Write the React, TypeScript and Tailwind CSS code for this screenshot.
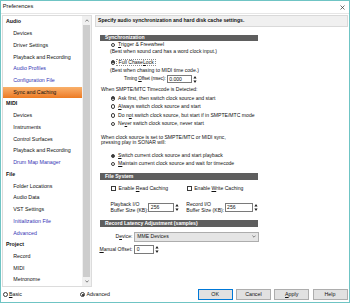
import type { ReactNode } from "react"

type TreeItem = { label: string; level: 0 | 1; blue?: boolean; selected?: boolean }

const tree: TreeItem[] = [
  { label: "Audio", level: 0 },
  { label: "Devices", level: 1 },
  { label: "Driver Settings", level: 1 },
  { label: "Playback and Recording", level: 1 },
  { label: "Audio Profiles", level: 1, blue: true },
  { label: "Configuration File", level: 1, blue: true },
  { label: "Sync and Caching", level: 1, selected: true },
  { label: "MIDI", level: 0 },
  { label: "Devices", level: 1 },
  { label: "Instruments", level: 1 },
  { label: "Control Surfaces", level: 1 },
  { label: "Playback and Recording", level: 1 },
  { label: "Drum Map Manager", level: 1, blue: true },
  { label: "File", level: 0 },
  { label: "Folder Locations", level: 1 },
  { label: "Audio Data", level: 1 },
  { label: "VST Settings", level: 1 },
  { label: "Initialization File", level: 1, blue: true },
  { label: "Advanced", level: 1, blue: true },
  { label: "Project", level: 0 },
  { label: "Record", level: 1 },
  { label: "MIDI", level: 1 },
  { label: "Metronome", level: 1 },
]

function Radio({ checked = false, children, className = "" }: { checked?: boolean; children: ReactNode; className?: string }) {
  return (
    <div className={`flex items-center h-[6px] ${className}`}>
      <span className="flex items-center justify-center w-[4.6px] h-[4.6px] rounded-full border border-[#3a3a3a] bg-white shrink-0">
        {checked && <span className="w-[2px] h-[2px] rounded-full bg-[#111]" />}
      </span>
      <span className="ml-[3px] whitespace-nowrap">{children}</span>
    </div>
  )
}

function Check({ children, className = "" }: { children: ReactNode; className?: string }) {
  return (
    <div className={`flex items-center h-[6px] ${className}`}>
      <span className="w-[5px] h-[5px] border border-[#3a3a3a] bg-white shrink-0" />
      <span className="ml-[2.5px] whitespace-nowrap">{children}</span>
    </div>
  )
}

function Spin() {
  return (
    <svg width="4" height="9" viewBox="0 0 4 9" className="ml-[1px] shrink-0">
      <path d="M0.4 3.6 L2 1 L3.6 3.6 Z" fill="#1a1a1a" />
      <path d="M0.4 5.4 L2 8 L3.6 5.4 Z" fill="#1a1a1a" />
    </svg>
  )
}

function NumBox({ value, className = "" }: { value: string; className?: string }) {
  return (
    <div className="flex items-center shrink-0">
      <div className={`border border-[#7a7a7a] bg-white flex items-center pl-[1.5px] ${className}`}>{value}</div>
      <Spin />
    </div>
  )
}

function Bar({ title, className = "" }: { title: string; className?: string }) {
  return (
    <div className={`w-[158px] h-[6.5px] bg-[#5e5e5e] text-white font-bold pl-[5px] flex items-center whitespace-nowrap ${className}`}>
      {title}
    </div>
  )
}

function Btn({ children, primary = false }: { children: ReactNode; primary?: boolean }) {
  return (
    <div
      className={`w-[35px] h-[11px] flex items-center justify-center bg-[#e1e1e1] border ${
        primary ? "border-[#0078d7]" : "border-[#adadad]"
      }`}
    >
      {children}
    </div>
  )
}

export default function App() {
  return (
    <div className="w-[350px] h-[303px] bg-white border border-[#6fc4c4] flex flex-col font-['Liberation_Sans',Arial,sans-serif] text-[5.3px] leading-none text-[#111] overflow-hidden">
      {/* title bar */}
      <div className="h-[13px] shrink-0 flex items-center justify-between pl-[1.7px] pr-[4px] border-b border-[#e6e6e6]">
        <span className="text-[5.7px]">Preferences</span>
        <svg width="5" height="5" viewBox="0 0 5 5">
          <path d="M0.5 0.5 L4.5 4.5 M4.5 0.5 L0.5 4.5" stroke="#333" strokeWidth="0.7" />
        </svg>
      </div>

      <div className="flex h-[273px] shrink-0">
        {/* tree */}
        <div className="ml-[1px] mt-[0.5px] w-[90px] h-[272px] border border-[#dcdcdc] flex overflow-hidden">
          <div className="w-[79px] pt-[0.6px]">
            {tree.map((t, i) => (
              <div
                key={i}
                className={`h-[11.74px] flex items-center whitespace-nowrap ${t.level === 0 ? "pl-[3px] font-bold" : "pl-[10.3px]"} ${
                  t.selected ? "bg-gradient-to-b from-[#f9b06a] to-[#ec7a1f]" : ""
                } ${t.blue ? "text-[#3434b4]" : ""}`}
              >
                {t.label}
              </div>
            ))}
          </div>
          <div className="w-[9px] bg-[#f0f0f0] flex flex-col">
            <div className="h-[9px] flex items-center justify-center">
              <svg width="4" height="3" viewBox="0 0 4 3">
                <path d="M0.4 2.5 L2 0.8 L3.6 2.5" stroke="#606060" strokeWidth="0.8" fill="none" />
              </svg>
            </div>
            <div className="flex-1 mx-[1px] bg-[#cdcdcd]" />
            <div className="h-[9px] flex items-center justify-center">
              <svg width="4" height="3" viewBox="0 0 4 3">
                <path d="M0.4 0.5 L2 2.2 L3.6 0.5" stroke="#606060" strokeWidth="0.8" fill="none" />
              </svg>
            </div>
          </div>
        </div>

        {/* right panel */}
        <div className="ml-[3px] mt-[1px] w-[253px] flex flex-col text-[5.1px]">
          <div className="h-[12px] border border-[#d9d9d9] bg-[#f0f0f0] font-bold pl-[2px] flex items-center whitespace-nowrap">
            Specify audio synchronization and hard disk cache settings.
          </div>

          <div className="pl-[5px] flex flex-col">
            <Bar title="Synchronization" className="mt-[7.5px]" />
            <Radio className="mt-[1px] ml-[10.5px]">
              <u>T</u>rigger &amp; Freewheel
            </Radio>
            <div className="mt-[0.5px] h-[6px] ml-[10px] flex items-center whitespace-nowrap">
              (Best when sound card has a word clock input.)
            </div>
            <div className="mt-[4.3px] h-[7px] ml-[10.5px] flex items-center">
              <span className="flex items-center justify-center w-[4.6px] h-[4.6px] rounded-full border border-[#3a3a3a] bg-white shrink-0">
                <span className="w-[2px] h-[2px] rounded-full bg-[#111]" />
              </span>
              <span className="ml-[1px] h-[7px] px-[1.5px] border border-dotted border-[#8a8a8a] flex items-center whitespace-nowrap shrink-0">
                Full Chase <u>L</u>ock
              </span>
            </div>
            <div className="mt-[1.5px] h-[6px] ml-[10px] flex items-center whitespace-nowrap">
              (Best when chasing to MIDI time code.)
            </div>
            <div className="mt-[1.7px] h-[8.5px] ml-[24px] flex items-center">
              <span className="w-[42.7px] whitespace-nowrap text-[4.6px] tracking-[-0.1px]">
                Timing <u>O</u>ffset (msec):
              </span>
              <NumBox value="0.000" className="w-[25.6px] h-[8.3px]" />
            </div>
            <div className="mt-[2.8px] h-[6px] ml-[1px] flex items-center whitespace-nowrap">
              When SMPTE/MTC Timecode is Detected:
            </div>
            <Radio checked className="mt-[3.2px] ml-[10.5px]">
              Ask first, then switch clock source and start
            </Radio>
            <Radio className="mt-[2.2px] ml-[10.5px]">
              <u>A</u>lways switch clock source and start
            </Radio>
            <Radio className="mt-[2.6px] ml-[10.5px]">
              Do n<u>o</u>t switch clock source, but start if in SMPTE/MTC mode
            </Radio>
            <Radio className="mt-[2.7px] ml-[10.5px]">
              Ne<u>v</u>er switch clock source, never start
            </Radio>
            <div className="mt-[8px] ml-[1px] leading-[5.5px] whitespace-nowrap">
              <div>When clock source is set to SMPTE/MTC or MIDI sync,</div>
              <div>pressing play in SONAR will:</div>
            </div>
            <Radio checked className="mt-[7px] ml-[10.5px]">
              <u>S</u>witch current clock source and start playback
            </Radio>
            <Radio className="mt-[2px] ml-[10.5px]">
              <u>M</u>aintain current clock source and wait for timecode
            </Radio>

            <Bar title="File System" className="mt-[6.5px]" />
            <div className="mt-[5.3px] ml-[11px] flex">
              <Check className="w-[75.7px]">
                Enable <u>R</u>ead Caching
              </Check>
              <Check>
                Enable <u>W</u>rite Caching
              </Check>
            </div>
            <div className="mt-[11.4px] h-[9px] ml-[10.5px] flex items-center">
              <div className="w-[37.8px] leading-[6px] whitespace-nowrap">
                <div>Playback I/O</div>
                <div>Buffer Size (KB):</div>
              </div>
              <NumBox value="256" className="w-[26px] h-[9px]" />
              <div className="ml-[7px] w-[38.3px] leading-[6px] whitespace-nowrap">
                <div>Record I/O</div>
                <div>Buffer Size (KB):</div>
              </div>
              <NumBox value="256" className="w-[28.3px] h-[9px]" />
            </div>

            <Bar title="Record Latency Adjustment (samples)" className="mt-[8.8px]" />
            <div className="mt-[5.3px] h-[9.4px] flex items-center">
              <span className="w-[32.5px] flex justify-end whitespace-nowrap">
                <span>
                  D<u>e</u>vice:
                </span>
              </span>
              <div className="ml-[1.8px] w-[125px] h-[9.4px] bg-[#e5e5e5] border border-[#adadad] flex items-center justify-between pl-[2px] pr-[2px]">
                <span>MME Devices</span>
                <svg width="4" height="3" viewBox="0 0 4 3">
                  <path d="M0.4 0.6 L2 2.2 L3.6 0.6" stroke="#555" strokeWidth="0.7" fill="none" />
                </svg>
              </div>
            </div>
            <div className="mt-[3.3px] h-[9px] flex items-center">
              <span className="w-[32.5px] flex justify-end whitespace-nowrap">
                <span>
                  <u>M</u>anual Offset:
                </span>
              </span>
              <div className="ml-[1.8px]">
                <NumBox value="0" className="w-[19.8px] h-[9px]" />
              </div>
            </div>
          </div>
        </div>
      </div>

      {/* footer */}
      <div className="h-[15px] shrink-0 flex items-center pl-[2.3px] pr-[1.5px]">
        <div className="w-[77px]">
          <Radio className="[&>span:last-child]:ml-[1px]">
            <u>B</u>asic
          </Radio>
        </div>
        <Radio checked className="[&>span:last-child]:ml-[1.5px]">
          Advanced
        </Radio>
        <div className="ml-auto flex gap-[3.3px]">
          <Btn primary>OK</Btn>
          <Btn>Cancel</Btn>
          <Btn>
            <u>A</u>pply
          </Btn>
          <Btn>Help</Btn>
        </div>
      </div>
    </div>
  )
}
